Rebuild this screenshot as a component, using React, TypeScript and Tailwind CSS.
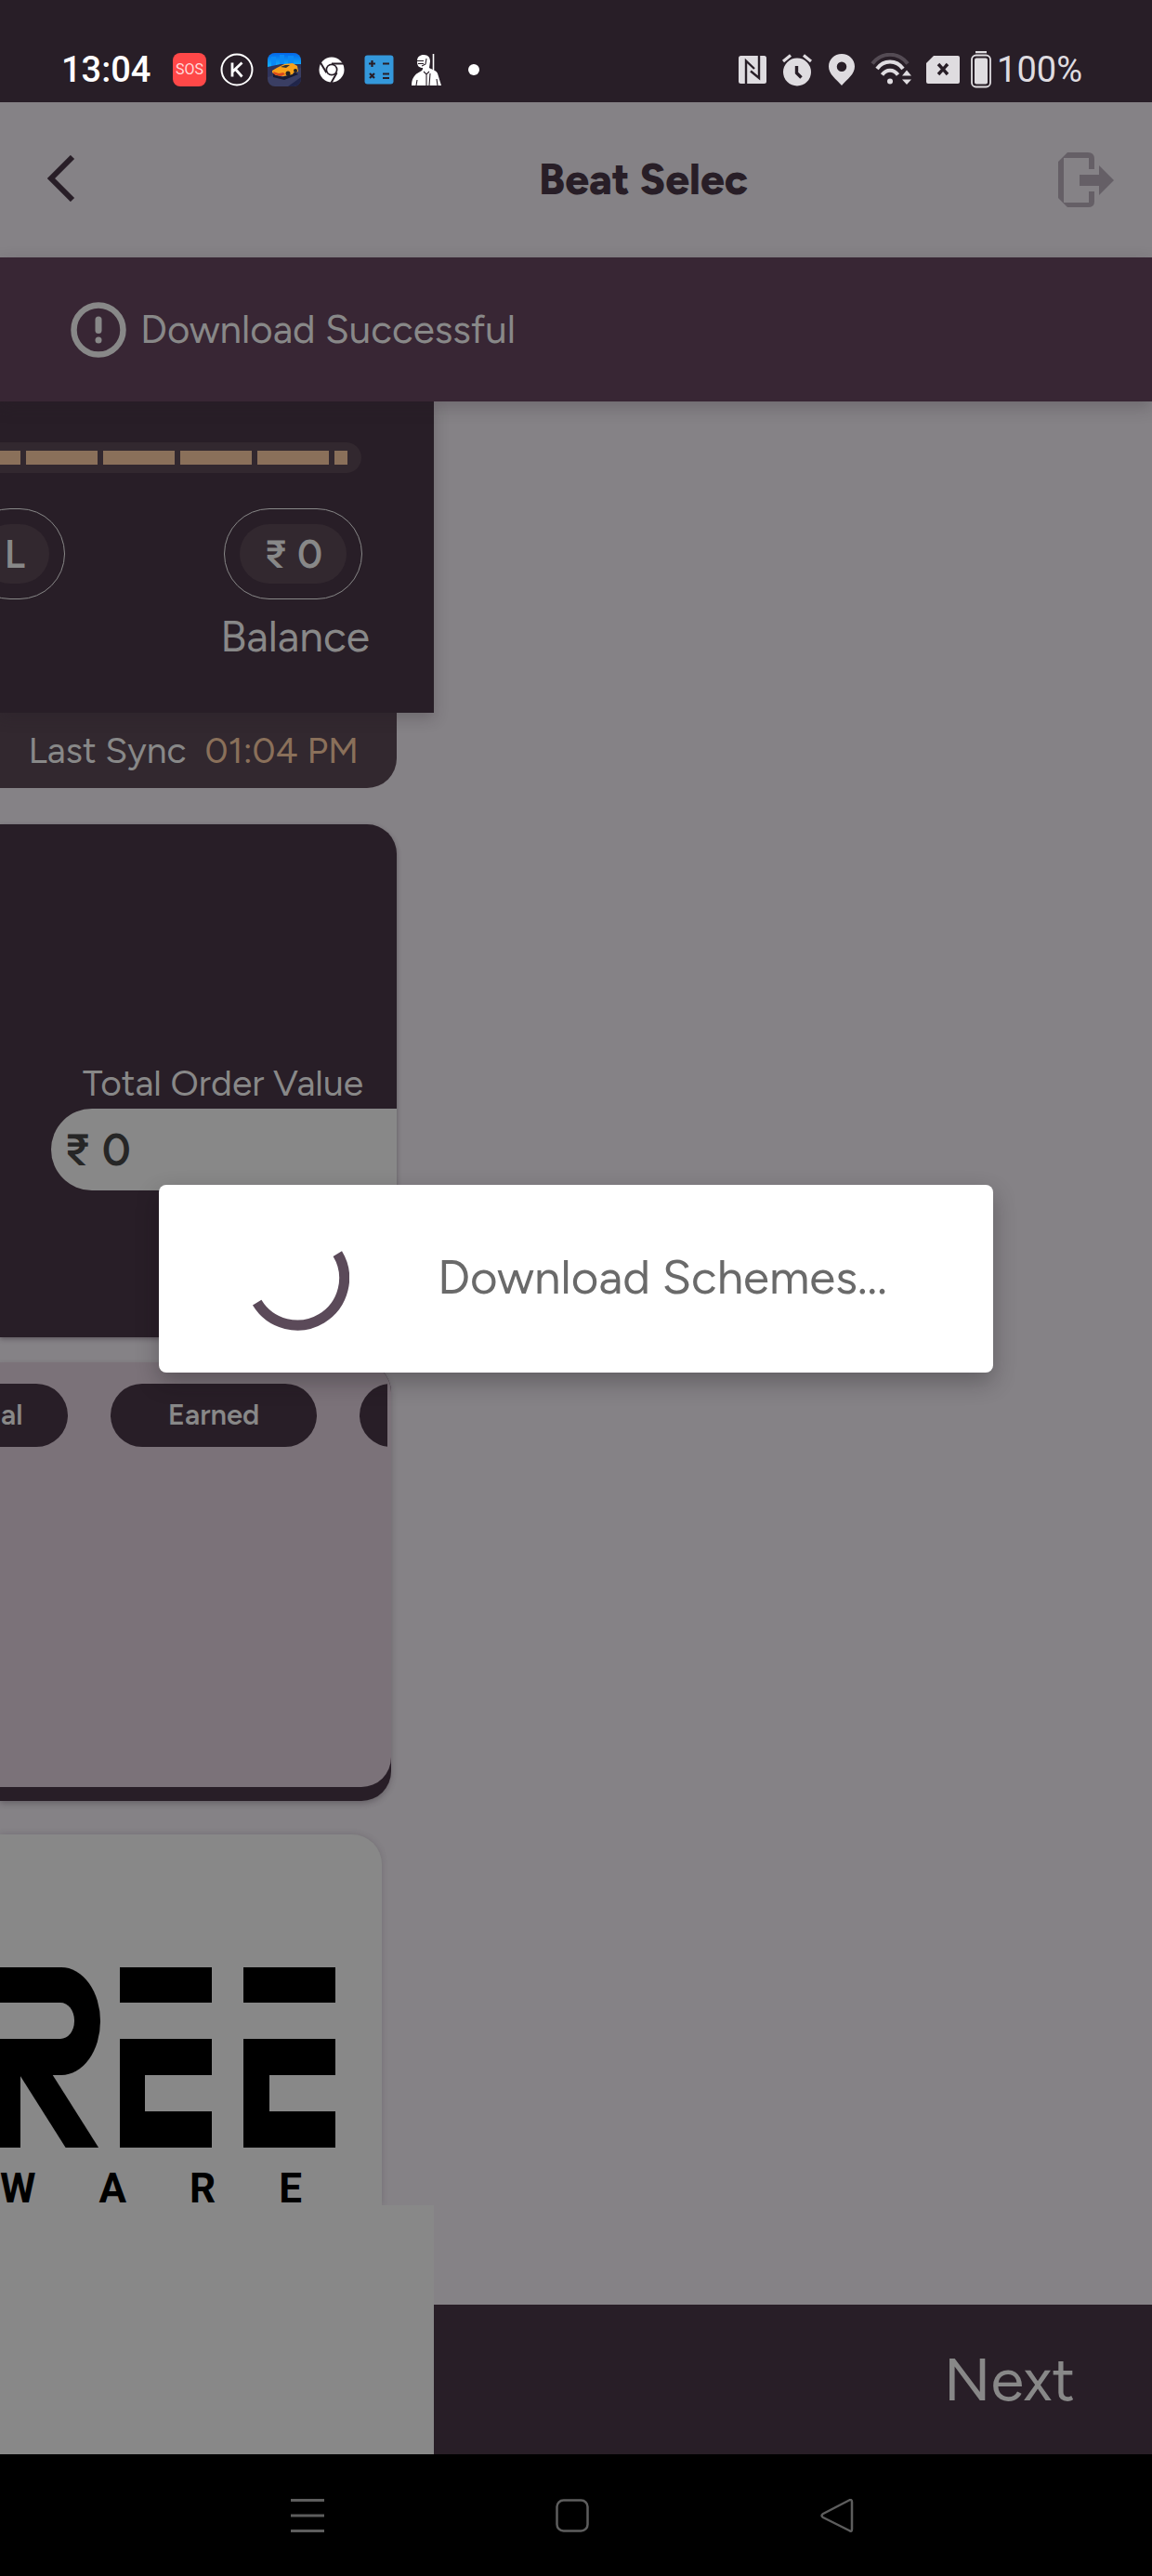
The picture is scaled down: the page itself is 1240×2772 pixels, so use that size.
import type { ReactNode } from "react";

const segments = [22, 77, 77, 77, 77, 14];

function Slot({ children }: { children: ReactNode }) {
  return <span className="flex size-9 items-center justify-center">{children}</span>;
}

function StatusBar() {
  return (
    <header className="flex h-[110px] items-end justify-between bg-[#281e27] pr-[75px] pl-[66px] font-[Roboto,sans-serif] text-[38px] leading-none">
      <div className="flex h-[53px] items-start gap-[15px]">
        <time className="mr-[9px] flex h-9 w-24 items-center font-medium text-white">13:04</time>
        <Slot>
          <span className="flex size-9 items-center justify-center rounded-lg bg-[#ff4848] text-[16px] text-[#ffd9d9]">SOS</span>
        </Slot>
        <Slot>
          <svg viewBox="0 0 36 36" className="size-9" fill="none" stroke="#fff">
            <circle cx="18" cy="18" r="16.500" strokeWidth="2" />
            <path d="M13 10.500V25.500M23.500 10.500 13.500 20M16.500 17.500 23.500 25.500" strokeWidth="2.800" />
          </svg>
        </Slot>
        <Slot>
          <svg viewBox="0 0 36 36" className="size-9">
            <defs>
              <clipPath id="tile"><rect width="36" height="36" rx="8" /></clipPath>
              <linearGradient id="sky" x2="0" y2="1"><stop stopColor="#0467e8" /><stop offset="1" stopColor="#12b4ff" /></linearGradient>
            </defs>
            <g clipPath="url(#tile)">
              <rect width="36" height="36" fill="#3a3e63" />
              <rect width="36" height="15" fill="url(#sky)" />
              <path d="M4 4h5v10H4zM13 2h5v10h-5zM22 3h6v9h-6z" fill="#0a8af5" />
              <path d="M0 15 14 12h22v4L0 26z" fill="#30345b" />
              <path d="M22 36 36 26v10z" fill="#20254a" />
              <path d="M6 22 16 26l14-5 3 2-15 6-12-3z" fill="#171a32" />
              <path d="m5 19 5-3 8-4 9-1 5 3 1 6-5 1-1 2-10 2-8-1-4-3z" fill="#f9a21b" />
              <path d="m14 15 5-2 5 0-4 3z" fill="#333" />
              <path d="m6 20 6 2 5-1 2 2-5 2-7-2z" fill="#d9481c" />
              <circle cx="22" cy="22" r="2.500" fill="#222" /><circle cx="30" cy="19" r="2" fill="#222" />
            </g>
          </svg>
        </Slot>
        <Slot>
          <svg viewBox="0 0 28 28" className="size-7">
            <circle cx="14" cy="14" r="13.500" fill="#fff" />
            <circle cx="14" cy="14" r="6.500" fill="#281e27" />
            <path d="M14 7.500H27M8.400 17.300 2 6.500M19.600 17.300 13.500 28" stroke="#281e27" strokeWidth="2" />
            <circle cx="14" cy="14" r="4.800" fill="#fff" />
          </svg>
        </Slot>
        <Slot>
          <svg viewBox="0 0 32 32" className="size-8">
            <rect width="31" height="31" x=".5" y=".5" rx="3" fill="#3498db" />
            <path d="M5 9.500h7M8.500 6v7M20 9.500h7M20 20.500h7M20 25h7M6 20l5 5M11 20l-5 5" stroke="#281e27" strokeWidth="2.200" />
          </svg>
        </Slot>
        <Slot>
          <svg viewBox="0 0 36 36" className="size-9">
            <path d="M8 9c0-5 3-7 7-7 5 0 7 3 7 7l-1 7c3 2 8 3 9 6l4 13H2c0-7 3-11 6-13l5-3c1-1 1-2 1-3-4 0-6-2-6-7z" fill="#fff" />
            <path d="M25.500 1v18" stroke="#fff" strokeWidth="1.600" />
            <path d="M7 8.500h8M9 11.500h6M13 14l4-2 1-6M15 20l3 3 3-3M18 23v12M22 22l-1 13M8 29l-1 6M29 28l1 7" stroke="#281e27" strokeWidth="1.100" fill="none" />
          </svg>
        </Slot>
        <Slot><span className="size-3 rounded-full bg-white" /></Slot>
      </div>
      <div className="flex h-[53px] items-start text-[#dfdce0]">
        <div className="flex h-9 items-center gap-4">
          <svg viewBox="0 0 30 30" className="h-[30px] w-[30px]">
            <rect width="30" height="30" rx="2.500" fill="currentColor" />
            <path d="M8 30V5.500L17 14M22 0v24L13 16.500" stroke="#281e27" strokeWidth="2.400" fill="none" />
          </svg>
          <svg viewBox="0 0 34 36" className="h-9 w-[34px]">
            <circle cx="17" cy="20.500" r="15" fill="currentColor" />
            <path d="M2 9 10 2.500M32 9 24 2.500" stroke="currentColor" strokeWidth="3.200" />
            <path d="M16.500 14v7.500l5 5" stroke="#281e27" strokeWidth="3.400" fill="none" />
          </svg>
          <svg viewBox="0 0 30 36" className="h-9 w-[30px]">
            <path d="M15 1C7 1 1 7 1 14.500 1 23 9 28 15 35 21 28 29 23 29 14.500 29 7 23 1 15 1zm0 8.500a5 5 0 1 1 0 10.500 5 5 0 0 1 0-10.500z" fill="currentColor" />
          </svg>
          <svg viewBox="0 0 44 36" className="h-9 w-11" fill="none">
            <path d="M2 11.500C12-1.500 30-1.500 40 11.500" stroke="#544b54" strokeWidth="4" />
            <path d="M7 17C14 7 28 7 35 17M12.500 23.500C17 17 25 17 29.500 23.500" stroke="currentColor" strokeWidth="4" />
            <circle cx="21" cy="30.500" r="3" fill="currentColor" />
            <path d="M34 24.500 39 18.500 44 24.500zM34 28.500 39 34 44 28.500z" fill="currentColor" />
          </svg>
          <svg viewBox="0 0 36 30" className="h-[30px] w-9">
            <path d="M8 0h26a2 2 0 0 1 2 2v26a2 2 0 0 1-2 2H2a2 2 0 0 1-2-2V8z" fill="currentColor" />
            <path d="m13 9 10 11M23 9 13 20" stroke="#281e27" strokeWidth="3.400" />
          </svg>
        </div>
        <div className="ml-3 flex h-9 items-center gap-[6px]">
          <svg viewBox="0 0 22 40" className="h-10 w-[22px]">
            <path d="M5 1h12" stroke="currentColor" strokeWidth="2.500" />
            <rect x="1" y="4.500" width="20" height="34" rx="4.500" fill="none" stroke="currentColor" strokeWidth="1.800" />
            <rect x="4" y="7.500" width="14" height="28" rx="2" fill="currentColor" />
          </svg>
          <span>100%</span>
        </div>
      </div>
    </header>
  );
}

function TitleBar() {
  return (
    <div className="flex h-[167px] items-center justify-between bg-[#858286] pr-[41px] pl-[50px]">
      <button type="button" aria-label="Back" className="pb-1">
        <svg viewBox="0 0 32 50" className="h-[50px] w-8" fill="none" stroke="#281e27" strokeWidth="6">
          <path d="M28 2 5 25 28 48" />
        </svg>
      </button>
      <h1 className="ml-[164px] text-[46px] font-extrabold text-[#281e27]">Beat Selec</h1>
      <button type="button" aria-label="Exit">
        <svg viewBox="0 0 60 60" className="size-[60px]" fill="#655f66">
          <path d="M10 0H32Q39 0 39 7V18H33V6H6V54H33V42H39V53Q39 59 32 59H10L0 49V10zM23 24H44V14L60 30 44 46V36H23z" />
        </svg>
      </button>
    </div>
  );
}

function Banner() {
  return (
    <div role="status" className="relative z-10 flex h-[155px] items-center gap-[15px] bg-[#382634] pl-[76px] text-[42px] text-[#888] shadow-[0_6px_16px_rgba(40,30,39,0.25)]">
      <svg viewBox="0 0 60 60" className="size-[60px]" fill="none" stroke="currentColor">
        <circle cx="30" cy="30" r="26.500" strokeWidth="6.500" />
        <path d="M30 19v11.500" strokeWidth="7" strokeLinecap="round" />
        <circle cx="30" cy="41" r="3.500" fill="currentColor" stroke="none" />
      </svg>
      Download Successful
    </div>
  );
}

function Pill({ children }: { children: ReactNode }) {
  return (
    <div className="flex h-[98px] items-center rounded-full border border-[#888] px-4">
      <span className="flex h-16 items-center rounded-full bg-[#32282f] px-[26px] text-[42px] font-semibold">{children}</span>
    </div>
  );
}

function BalancePanel() {
  return (
    <section className="relative h-[335px] w-full bg-[#281e27] pt-11 text-[#888] shadow-[0_6px_14px_rgba(40,30,39,0.25)]">
      <div className="flex h-[33px] w-[389px] items-center gap-[6px] overflow-hidden rounded-r-full bg-[#32282f]">
        {segments.map((w, i) => (
          <span key={i} className="h-[15px] shrink-0 bg-[#8a705a]" style={{ width: w }} />
        ))}
      </div>
      <div className="mt-[38px] flex justify-between pr-[77px]">
        <div className="flex w-[70px] justify-end overflow-hidden"><Pill>L</Pill></div>
        <Pill>₹ 0</Pill>
      </div>
      <p className="pt-[10px] pr-[69px] text-right text-[46px] leading-[60px]">Balance</p>
    </section>
  );
}

function OrderCard() {
  return (
    <section className="mt-[39px] flex h-[552px] w-[427px] flex-col items-end rounded-r-[32px] bg-[#281e27] pt-[252px] shadow-[0_2px_5px_rgba(40,30,39,0.4)]">
      <h2 className="pr-[36px] text-[39px] leading-[54px] whitespace-nowrap text-[#888]">Total Order Value</h2>
      <p className="flex h-[88px] w-[372px] items-center rounded-l-full bg-[#888] pl-[14px] text-[48px] font-semibold text-[#262626]">₹ 0</p>
    </section>
  );
}

function EarnedCard() {
  return (
    <section className="mt-[27px] w-[421px] rounded-r-[32px] bg-[#281e27] pb-[15px] shadow-[0_3px_6px_rgba(40,30,39,0.3)]">
      <div className="h-[457px] rounded-r-[32px] bg-[#7b7279] pt-[23px] pr-1">
        <div className="flex gap-[46px] overflow-hidden text-[31px] font-semibold text-[#888]">
          <button type="button" className="flex h-[68px] w-[73px] shrink-0 items-center rounded-r-full bg-[#281e27] pl-px">al</button>
          <button type="button" className="flex h-[68px] w-[222px] shrink-0 items-center justify-center rounded-full bg-[#281e27]">Earned</button>
          <button type="button" aria-label="More" className="h-[68px] w-[222px] shrink-0 rounded-full bg-[#281e27]" />
        </div>
      </div>
    </section>
  );
}

function LogoCard() {
  return (
    <section className="mt-9 h-[399px] w-[411px] rounded-tr-[32px] bg-[#888] pt-[143px] text-black shadow-[0_0_6px_rgba(60,50,65,0.25)]">
      <svg role="img" aria-label="REE" viewBox="0 0 361 194" className="h-[194px] w-[361px]">
        <rect x="-80" width="188" height="116" rx="42" ry="58" />
        <rect x="-80" y="38" width="160" height="39" rx="15" ry="19" fill="#888" />
        <rect y="78" width="22" height="116" />
        <line x1="27" y1="97" x2="101" y2="214" stroke="#000" strokeWidth="30" />
        <rect x="129" width="99" height="38" /><rect x="129" y="77" width="99" height="39" />
        <rect x="129" y="77" width="27" height="117" /><rect x="129" y="155" width="99" height="39" />
        <rect x="262" width="99" height="38" /><rect x="262" y="77" width="99" height="39" />
        <rect x="262" y="77" width="28" height="117" /><rect x="262" y="155" width="99" height="39" />
      </svg>
      <p className="mt-[27px] flex w-[325px] justify-between font-[Roboto,sans-serif] text-[44px] leading-[35px] font-bold">
        <span>W</span><span>A</span><span>R</span><span>E</span>
      </p>
    </section>
  );
}

function LoadingDialog() {
  return (
    <div className="absolute inset-0 z-20 flex items-center px-[171px]">
      <div role="dialog" aria-label="Download progress" className="flex h-[202px] w-full items-center gap-[95px] rounded-lg bg-white pl-[93px] text-[51px] text-[#6a6a6a] shadow-[0_10px_24px_rgba(20,15,20,0.3)]">
        <svg viewBox="0 0 112 112" className="size-28" fill="none" stroke="#5b4a59" strokeWidth="11">
          <path d="M99.300 29.200A50.500 50.500 0 0 1 12.700 81.600" />
        </svg>
        Download Schemes...
      </div>
    </div>
  );
}

function NavBar() {
  return (
    <nav className="grid h-[131px] grid-cols-3 items-center justify-items-center bg-black pr-[196px] pl-[188px]">
      <button type="button" aria-label="Recent apps">
        <svg viewBox="0 0 36 36" className="size-9" stroke="#5d5d5d" strokeWidth="3"><path d="M0 1.500h36M0 18h36M0 34.500h36" /></svg>
      </button>
      <button type="button" aria-label="Home">
        <svg viewBox="0 0 36 36" className="size-9" stroke="#5d5d5d" strokeWidth="2.500" fill="none"><rect x="1.500" y="1.500" width="33" height="33" rx="7" /></svg>
      </button>
      <button type="button" aria-label="Back">
        <svg viewBox="0 0 36 36" className="size-9" stroke="#5d5d5d" strokeWidth="2.500" strokeLinejoin="round" fill="none"><path d="M31 1.500Q34 0 34 3.500V32.500Q34 36 31 34L3 20Q0 18 3 16z" /></svg>
      </button>
    </nav>
  );
}

export default function App() {
  return (
    <div className="flex min-h-screen flex-col overflow-hidden bg-[#858286] font-[Figtree,Lato,sans-serif]">
      <StatusBar />
      <main className="relative flex flex-1 flex-col">
        <TitleBar />
        <Banner />
        <div className="flex flex-1">
          <div className="flex w-[467px] shrink-0 flex-col">
            <BalancePanel />
            <p className="flex h-[81px] w-[427px] items-center justify-end gap-5 rounded-br-[32px] bg-[#32282f] pt-px pr-[41px] text-[39px] whitespace-nowrap text-[#888]">
              <span>Last Sync</span>
              <time className="text-[#8a705a]">01:04 PM</time>
            </p>
            <OrderCard />
            <EarnedCard />
            <LogoCard />
            <div className="relative min-h-[268px] flex-1 bg-[#888]" />
          </div>
          <div className="flex flex-1 flex-col justify-end">
            <footer className="flex h-[161px] items-center justify-end bg-[#281e27] pr-[83px]">
              <button type="button" className="text-[65px] text-[#888]">Next</button>
            </footer>
          </div>
        </div>
        <LoadingDialog />
      </main>
      <NavBar />
    </div>
  );
}
